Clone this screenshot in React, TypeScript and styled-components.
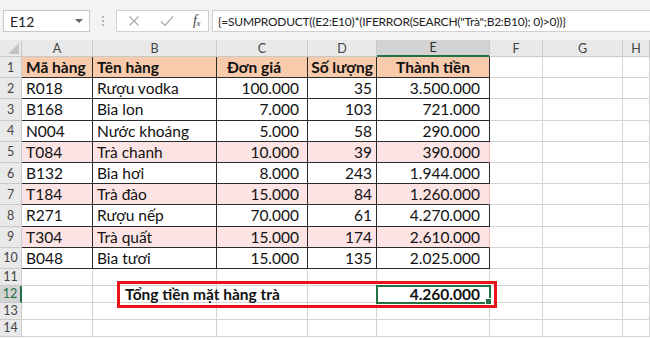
import React from "react";
import styled, { createGlobalStyle } from "styled-components";

const Global = createGlobalStyle`
  html, body { margin: 0; padding: 0; background: #fff; overflow: hidden; }
  * { box-sizing: border-box; }
`;

const FONT = `Lato, "Noto Sans", "Liberation Sans", sans-serif`;

const Page = styled.div`
  width: 650px;
  height: 339px;
  overflow: hidden;
  font-family: ${FONT};
  background: #fff;
`;

const Toolbar = styled.div`
  height: 40px;
  background: #f3f3f3;
  display: flex;
  align-items: flex-start;
  padding: 10px 0 0 3px;
`;

const NameBox = styled.div`
  width: 87px;
  height: 22px;
  background: #fff;
  border: 1px solid #c8c8c8;
  display: flex;
  align-items: center;
  justify-content: space-between;
  padding: 0 6px 0 6px;
  font-size: 14px;
  color: #222;
`;

const Caret = styled.span`
  width: 0;
  height: 0;
  border-left: 4px solid transparent;
  border-right: 4px solid transparent;
  border-top: 4px solid #666;
`;

const Dots = styled.div`
  width: 26px;
  height: 22px;
  display: flex;
  flex-direction: column;
  align-items: center;
  justify-content: center;
  gap: 2px;
  & > span {
    width: 2px;
    height: 2px;
    background: #a5a5a5;
    border-radius: 1px;
  }
`;

const FxBox = styled.div`
  width: 93px;
  height: 22px;
  background: #fff;
  border: 1px solid #d0d0d0;
  display: flex;
  align-items: center;
  justify-content: space-between;
  padding: 0 8px 0 11px;
`;

const Fx = styled.span`
  font-family: "Liberation Serif", serif;
  font-style: italic;
  font-size: 14px;
  color: #444;
  letter-spacing: -0.5px;
  & > sub {
    font-size: 9px;
    vertical-align: -1px;
  }
`;

const FormulaInput = styled.div`
  flex: 1;
  height: 22px;
  margin-left: 3px;
  background: #fff;
  border: 1px solid #d0d0d0;
  border-right: none;
  display: flex;
  align-items: center;
  padding-left: 5px;
  font-size: 12px;
  letter-spacing: -0.25px;
  color: #222;
  white-space: nowrap;
  overflow: hidden;
`;

const Sheet = styled.div`
  position: relative;
  display: grid;
  grid-template-columns: 22px 71px 124px 91px 69px 113px 53px 80px 1fr;
  grid-template-rows: 17px repeat(10, 21.2px) repeat(4, 17px);
`;

const ColHead = styled.div<{ $sel?: boolean }>`
  background: ${(p) => (p.$sel ? "#d3d3d3" : "#e9e9e9")};
  border-right: 1px solid #c9c9c9;
  border-bottom: ${(p) => (p.$sel ? "2px solid #217346" : "1px solid #c9c9c9")};
  display: flex;
  align-items: center;
  justify-content: center;
  font-size: 12.5px;
  color: ${(p) => (p.$sel ? "#2b2b2b" : "#444")};
  position: relative;
`;

const Corner = styled(ColHead)`
  &::after {
    content: "";
    position: absolute;
    right: 2px;
    bottom: 2px;
    width: 0;
    height: 0;
    border-left: 11px solid transparent;
    border-bottom: 11px solid #c4c4c4;
  }
`;

const RowHead = styled.div<{ $sel?: boolean }>`
  background: ${(p) => (p.$sel ? "#d3d3d3" : "#e9e9e9")};
  border-right: ${(p) => (p.$sel ? "2px solid #217346" : "1px solid #c9c9c9")};
  border-bottom: 1px solid #c9c9c9;
  display: flex;
  align-items: center;
  justify-content: center;
  font-size: 12.5px;
  color: ${(p) => (p.$sel ? "#217346" : "#444")};
`;

type Align = "left" | "right" | "center";

const Cell = styled.div<{
  $fill?: string;
  $bold?: boolean;
  $align?: Align;
  $pl?: number;
  $pr?: number;
  $rb?: string;
  $bb?: string;
  $sel?: boolean;
  $over?: boolean;
}>`
  position: relative;
  background: ${(p) => p.$fill || "#fff"};
  border-right: 1px solid ${(p) => p.$rb || "#d4d4d4"};
  border-bottom: 1px solid ${(p) => p.$bb || "#d4d4d4"};
  display: flex;
  align-items: center;
  justify-content: ${(p) =>
    p.$align === "right" ? "flex-end" : p.$align === "center" ? "center" : "flex-start"};
  padding-left: ${(p) => p.$pl ?? 4}px;
  padding-right: ${(p) => p.$pr ?? 4}px;
  font-size: 15.5px;
  font-weight: ${(p) => (p.$bold ? 700 : 400)};
  color: #111;
  white-space: nowrap;
  overflow: visible;
  z-index: ${(p) => (p.$sel || p.$over ? 2 : 1)};
  ${(p) =>
    p.$sel
      ? `
    outline: 2px solid #217346;
    outline-offset: -1px;
    &::after {
      content: "";
      position: absolute;
      right: -3px;
      bottom: -3px;
      width: 5px;
      height: 5px;
      background: #217346;
      border: 1px solid #fff;
    }
  `
      : ""}
`;

const Highlight = styled.div`
  position: absolute;
  left: 117px;
  top: 241px;
  width: 380px;
  height: 27px;
  border: 3px solid #e8141a;
  z-index: 3;
  pointer-events: none;
`;

const DARK = "#2a2a2a";
const PEACH = "#f8cbad";
const PINK = "#fde4e4";
const PINKLINE = "#f2bcbc";

const cols = ["A", "B", "C", "D", "E", "F", "G", "H"];

const header = ["Mã hàng", "Tên hàng", "Đơn giá", "Số lượng", "Thành tiền"];
const data: { v: string[]; pink?: boolean }[] = [
  { v: ["R018", "Rượu vodka", "100.000", "35", "3.500.000"] },
  { v: ["B168", "Bia lon", "7.000", "103", "721.000"] },
  { v: ["N004", "Nước khoáng", "5.000", "58", "290.000"] },
  { v: ["T084", "Trà chanh", "10.000", "39", "390.000"], pink: true },
  { v: ["B132", "Bia hơi", "8.000", "243", "1.944.000"] },
  { v: ["T184", "Trà đào", "15.000", "84", "1.260.000"], pink: true },
  { v: ["R271", "Rượu nếp", "70.000", "61", "4.270.000"] },
  { v: ["T304", "Trà quất", "15.000", "174", "2.610.000"], pink: true },
  { v: ["B048", "Bia tươi", "15.000", "135", "2.025.000"] },
];

const numPad = [0, 0, 8, 4, 9];

const X = () => (
  <svg width="12" height="12" viewBox="0 0 12 12">
    <path d="M1.5 1.5 L10.5 10.5 M10.5 1.5 L1.5 10.5" stroke="#a8a8a8" strokeWidth="1.2" fill="none" />
  </svg>
);
const Check = () => (
  <svg width="14" height="12" viewBox="0 0 14 12">
    <path d="M1 6.5 L5 10.5 L13 1.5" stroke="#a8a8a8" strokeWidth="1.2" fill="none" />
  </svg>
);

const Empty = ({ n }: { n: number }) => (
  <>
    {Array.from({ length: n }).map((_, i) => (
      <Cell key={i} />
    ))}
  </>
);

export default function App() {
  return (
    <Page>
      <Global />
      <Toolbar>
        <NameBox>
          E12
          <Caret />
        </NameBox>
        <Dots>
          <span />
          <span />
          <span />
        </Dots>
        <FxBox>
          <X />
          <Check />
          <Fx>
            f<sub>x</sub>
          </Fx>
        </FxBox>
        <FormulaInput>{'{=SUMPRODUCT((E2:E10)*(IFERROR(SEARCH("Trà";B2:B10); 0)>0))}'}</FormulaInput>
      </Toolbar>
      <Sheet>
        <Corner />
        {cols.map((c, i) => (
          <ColHead key={i} $sel={c === "E"}>
            {c}
          </ColHead>
        ))}

        <RowHead>1</RowHead>
        {header.map((h, i) => (
          <Cell
            key={i}
            $fill={PEACH}
            $bold
            $align={i >= 3 ? "center" : "left"}
            $pl={i === 2 ? 10 : 4}
            $rb={DARK}
            $bb={DARK}
          >
            {h}
          </Cell>
        ))}
        <Empty n={3} />

        {data.map((r, ri) => (
          <React.Fragment key={ri}>
            <RowHead>{ri + 2}</RowHead>
            {r.v.map((v, ci) => (
              <Cell
                key={ci}
                $fill={r.pink ? PINK : "#fff"}
                $align={ci >= 2 ? "right" : "left"}
                $pr={ci >= 2 ? numPad[ci] : 4}
                $rb={ci === 4 && r.pink ? PINKLINE : DARK}
                $bb={DARK}
              >
                {v}
              </Cell>
            ))}
            <Empty n={3} />
          </React.Fragment>
        ))}

        <RowHead>11</RowHead>
        <Empty n={8} />

        <RowHead $sel>12</RowHead>
        <Cell />
        <Cell $bold $pl={32} $over>
          Tổng tiền mặt hàng trà
        </Cell>
        <Cell />
        <Cell />
        <Cell $bold $align="right" $pr={9} $sel>
          4.260.000
        </Cell>
        <Empty n={3} />

        <RowHead>13</RowHead>
        <Empty n={8} />
        <RowHead>14</RowHead>
        <Empty n={8} />

        <Highlight />
      </Sheet>
    </Page>
  );
}
